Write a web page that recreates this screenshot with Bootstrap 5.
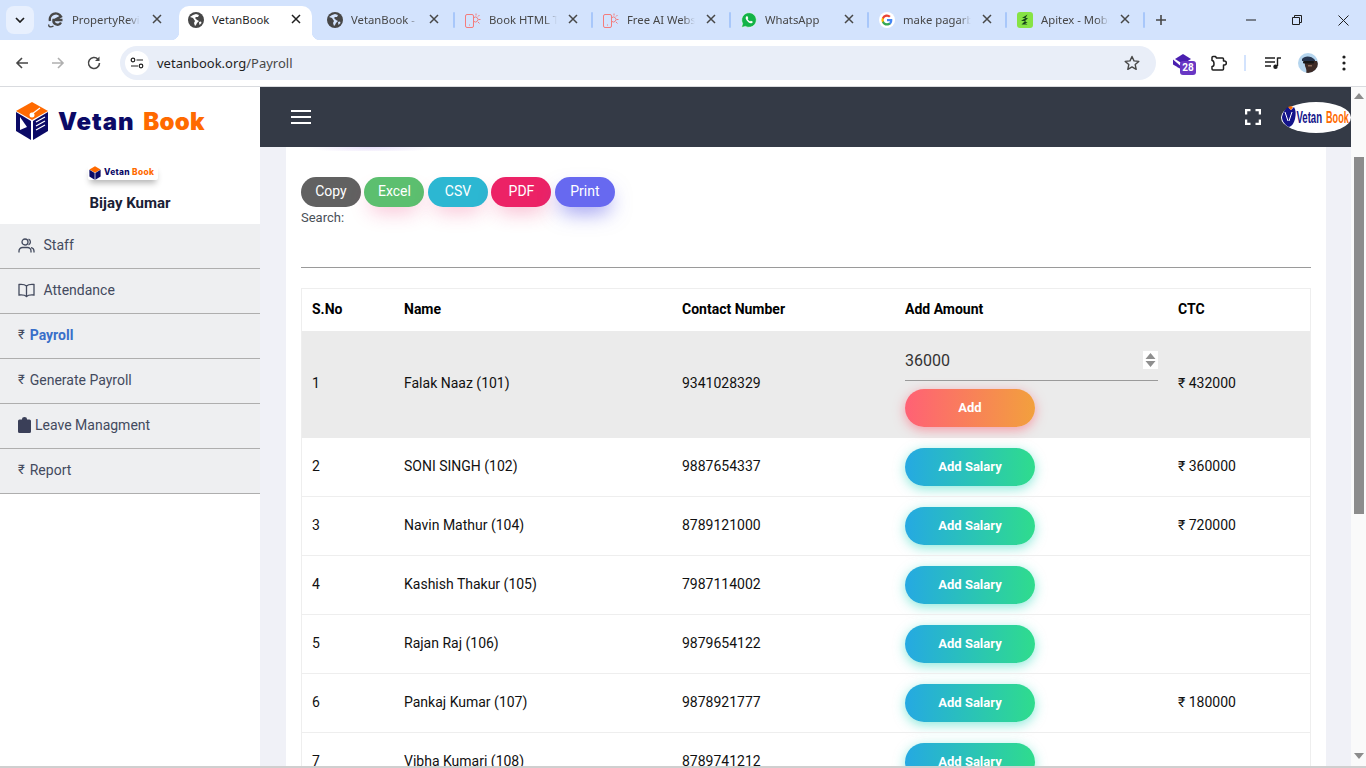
<!DOCTYPE html>
<html lang="en">
<head>
<meta charset="utf-8">
<title>VetanBook</title>
<link href="https://cdn.jsdelivr.net/npm/bootstrap@5.3.0/dist/css/bootstrap.min.css" rel="stylesheet">
<style>
html,body{height:768px;overflow:hidden}
body{font-family:Roboto,"Liberation Sans",sans-serif;font-size:14px;background:#fff;color:#212529}
/* browser chrome */
.tabstrip{height:40px;background:#d3e3fd;font-family:"Noto Sans","Open Sans",sans-serif;font-size:11.3px;color:#474747}
.expander{width:28px;height:28px;margin:6px 2px 0 6px;background:#e8f0fe;border-radius:8px;flex:none}
.ctab{height:34px;margin-top:6px;position:relative}
.ctitle{width:68px;margin-left:8px;overflow:hidden;white-space:nowrap;-webkit-mask-image:linear-gradient(90deg,#000 82%,transparent);mask-image:linear-gradient(90deg,#000 82%,transparent);line-height:16px}
.cclose{margin-left:auto;flex:none;margin-top:-2px}
.tab1{width:143px;padding:0 17px 6px 12px}
.tab2{width:133px;padding:0 11px 6px 9px;background:#fff;border-radius:10px 10px 0 0;color:#1f1f1f}
.tab2 .ctitle{-webkit-mask-image:none;mask-image:none;flex:1 1 auto;color:#1f1f1f}
.tab2::before,.tab2::after{content:"";position:absolute;bottom:0;width:8px;height:8px}
.tab2::before{left:-8px;background:radial-gradient(circle at 0 0,transparent 8px,#fff 8.5px)}
.tab2::after{right:-8px;background:radial-gradient(circle at 100% 0,transparent 8px,#fff 8.5px)}
.tab3{width:141px;padding:0 14px 6px 15px}
.tab4{width:136px;padding:0 13px 6px 10px}
.tabsep{width:2px;height:16px;margin-top:12px;background:#a8c7fa;flex:none;border-radius:1px}
.plus{margin:0 0 0 9px}
.winbtn{width:46px;height:40px}
.toolbar{height:47px;background:#fff;border-bottom:1px solid #d9dbdf;border-radius:8px 8px 0 0}
.navbtn{width:36px;flex:none}
.omni{width:1036px;height:34px;background:#e9eef8;border-radius:17px;margin-left:-8px;padding-left:5px;padding-right:16px;flex:none}
.siteinfo{width:24px;height:24px;border-radius:50%;background:#fff;margin-right:8px}
.urlpath{color:#474747}
.urltext{font-family:"Noto Sans",sans-serif;font-size:13px;color:#1f1f1f;padding-top:2px}
.tool-ext{margin-left:17px;width:24px;height:24px;position:relative;flex:none}
.extbadge{position:absolute;left:7px;top:10px;width:16px;height:14px;background:#6937c4;color:#fff;font:700 10px/14px Roboto,sans-serif;text-align:center;border-radius:3px}
.toolicon{flex:none}
.tool-puzzle{margin-left:14px}
.toolsep{width:2px;height:16px;background:#d3e3fd;margin:0 19px 0 15px;flex:none}
.tool-music{margin-right:17px}
.tool-avatar{margin-right:24px}
/* app */
.appwrap{height:679px}
.sidebar{width:260px;flex:none;background:#fff}
.brandbox{height:137px;background:#fff}
.brandrow{height:64px;padding-left:15px}
.brandname{font-family:Inter,"Noto Sans",sans-serif;font-weight:900;font-size:24px;letter-spacing:1px;line-height:1;margin-left:9px;padding-top:2px;color:#0b0a66;white-space:nowrap}
.brandname span{color:#ff6a00;margin-left:3px;letter-spacing:.2px}
.minilogo{width:70px;height:15px;margin:14px 0 0 88px;background:#fff;box-shadow:0 5px 6px -2px rgba(0,0,0,.3);border-radius:2px;padding-left:1px}
.minilogo b{font-family:Inter,sans-serif;font-weight:800;font-size:8.4px;letter-spacing:.3px;color:#0b0a66;margin-left:3px;white-space:nowrap}
.minilogo b span{color:#ff6a00}
.username{font-weight:700;font-size:15px;color:#1a2035;text-align:center;margin-top:13px;line-height:20px}
.sidenav{list-style:none;margin:0;padding:0}
.sidenav a{display:flex;align-items:center;height:45px;padding:0 0 2px 18px;background:#eeeff1;border-bottom:1px solid #aeaeae;color:#434a5e;text-decoration:none;font-size:14px}
.sidenav a.current{color:#3a6fc9;font-weight:700}
.sidenav svg{flex:none}
.gap-r{margin-right:8.500px}
.gap-c{margin-right:4px}
.rup{color:#434a5e;font-weight:400;margin-right:5px;font-size:13px}
.mainarea{width:1091px;flex:none;background:#f0f1f7;overflow:hidden}
.topbar{height:60px;background:#343a46;padding:0 0 0 31px;flex:none}
.burger{width:20px;display:block}
.burger i{display:block;height:2px;background:#fff;margin:4px 0}
.fsicon{margin-left:auto;margin-right:20px}
.cardwrap{margin:0 25px 0 26px;background:#fff;padding:0 15px;overflow:hidden;flex:1 1 auto}
.shadowbit{height:4px;width:130px;margin-left:5px;background:radial-gradient(ellipse 65px 6px at 50% 0,rgba(150,110,230,.22),transparent);margin-bottom:26px}
.btnrow{height:30px}
.dtbtn{display:inline-block;width:60px;height:30px;line-height:27px;border-radius:15px;border:0;color:#fff;font-size:14px;padding:0 0 2px;text-align:center;vertical-align:top}
.dt-copy{background:#616161}
.dt-excel{background:#5cbf6f;box-shadow:0 10px 20px -5px rgba(233,30,99,.28)}
.dt-csv{background:#2cb7d2;box-shadow:0 10px 20px -5px rgba(233,30,99,.28)}
.dt-pdf{background:#ec2266;box-shadow:0 10px 20px -5px rgba(233,30,99,.32)}
.dt-print{background:#6769f0;box-shadow:0 10px 20px -4px rgba(80,80,230,.55)}
.searchlbl{font-size:13px;line-height:20px;color:#495057;margin:1px 0 39px}
.rule{height:1px;background:#9a9a9a;margin:0 0 20px;opacity:1;border:0}
.paytable{table-layout:fixed;width:1009px;border:1px solid #eee;border-collapse:collapse;margin:0;color:#212529;font-size:14px}
.paytable th,.paytable td{padding:10px;vertical-align:middle;border:0;border-bottom:1px solid #eee;box-shadow:none;background:transparent;color:#111}
.paytable th{height:42px;font-weight:700;color:#000;border-bottom:0}
.paytable tbody td:not(:nth-child(4)){padding-bottom:11px}
.paytable tr.editing td{background:#ebebeb;border-bottom:0}
.c1{width:92.500px}.c2{width:278px}.c3{width:223px}.c4{width:273px}.c5{width:142.500px}
.paytable tbody td{height:59px}
.paytable tr.editing td{height:107px}
.amtbox{position:relative;width:253px;margin-bottom:8px}
.amt{display:block;width:253px;height:40px;border:0;border-bottom:1px solid #9a9a9a;background:transparent;font-family:Roboto,sans-serif;font-size:16px;color:#333;padding:0;outline:0}
.amt::-webkit-inner-spin-button{-webkit-appearance:none;appearance:none;margin:0}
.spinbox{position:absolute;right:0;top:10px;width:15px;height:18px;background:#fff;display:flex;align-items:center;justify-content:center}
.pill{display:block;width:130px;height:38px;border:0;border-radius:19px;color:#fff;font-weight:700;font-size:13px;padding:0;text-align:center}
.pill-add{background:linear-gradient(90deg,#ff6175,#f2a03d);box-shadow:0 3px 12px rgba(255,90,110,.55)}
.pill-sal{background:linear-gradient(90deg,#25a9e2,#2fdc8d);box-shadow:0 3px 12px rgba(45,215,190,.55)}
.vscroll{width:15px;flex:none;background:#fafafa}
.vup{margin:6px auto 0;display:block}
.vthumb{width:10px;height:357px;background:#8c8c8c;margin:58px auto 0}
.vdown{margin:auto auto 7px;display:block}
.winedge{height:2px;background:#cfcfcf}
</style>
</head>
<body>
<div class="tabstrip d-flex">
  <div class="expander d-flex align-items-center justify-content-center"><svg width="10" height="6" viewBox="0 0 10 6"><path d="M1 1l4 4 4-4" fill="none" stroke="#1f1f1f" stroke-width="1.7"/></svg></div>
  <div class="ctab tab1 d-flex align-items-center">
    <svg width="16" height="16" viewBox="0 0 16 16"><path d="M2 9a6 6 0 0 1 11-4.500L6 8.200M14.500 8H5.500a4 4 0 0 0 7.500 2.500" fill="none" stroke="#474747" stroke-width="2.4"/><path d="M1 12.500C0 15 3 15.500 5.500 14" fill="none" stroke="#474747" stroke-width="1.4"/></svg>
    <span class="ctitle">PropertyReview</span>
    <svg class="cclose" width="10" height="10" viewBox="0 0 10 10"><path d="M1 1l8 8M9 1l-8 8" stroke="#474747" stroke-width="1.5"/></svg>
  </div>
  <div class="ctab tab2 d-flex align-items-center">
    <svg width="16" height="16" viewBox="0 0 16 16"><circle cx="8" cy="8" r="8" fill="#474747"/><path d="M2 5l3 1 2 3-1 2 1 3 1-1 1-2 2-2-2-1-1-1-1-1 1-1 2 0 1-2-3-1-3 1z" fill="#fff"/><path d="M11 10l2-.5.5 1.500-2 2z" fill="#fff"/></svg>
    <span class="ctitle">VetanBook</span>
    <svg class="cclose" width="10" height="10" viewBox="0 0 10 10"><path d="M1 1l8 8M9 1l-8 8" stroke="#1f1f1f" stroke-width="1.5"/></svg>
  </div>
  <div class="ctab tab3 d-flex align-items-center">
    <svg width="16" height="16" viewBox="0 0 16 16"><circle cx="8" cy="8" r="8" fill="#474747"/><path d="M2 5l3 1 2 3-1 2 1 3 1-1 1-2 2-2-2-1-1-1-1-1 1-1 2 0 1-2-3-1-3 1z" fill="#d3e3fd"/><path d="M11 10l2-.5.5 1.500-2 2z" fill="#d3e3fd"/></svg>
    <span class="ctitle">VetanBook - Home</span>
    <svg class="cclose" width="10" height="10" viewBox="0 0 10 10"><path d="M1 1l8 8M9 1l-8 8" stroke="#474747" stroke-width="1.5"/></svg>
  </div>
  <i class="tabsep"></i>
  <div class="ctab tab4 d-flex align-items-center">
    <svg width="16" height="16" viewBox="0 0 16 16"><rect x=".5" y="2.500" width="8" height="13" rx="1.500" fill="none" stroke="#f47c7c"/><path d="M9 5.500a2.500 2.500 0 1 1 0 4M11 1.500v2M14.500 3l-1.500 1.500M15.500 7.500h-2M14.500 11.500L13 10M4 13h1" fill="none" stroke="#f47c7c"/></svg>
    <span class="ctitle">Book HTML Template</span>
    <svg class="cclose" width="10" height="10" viewBox="0 0 10 10"><path d="M1 1l8 8M9 1l-8 8" stroke="#474747" stroke-width="1.5"/></svg>
  </div>
  <i class="tabsep"></i>
  <div class="ctab tab4 d-flex align-items-center">
    <svg width="16" height="16" viewBox="0 0 16 16"><rect x=".5" y="2.500" width="8" height="13" rx="1.500" fill="none" stroke="#f47c7c"/><path d="M9 5.500a2.500 2.500 0 1 1 0 4M11 1.500v2M14.500 3l-1.500 1.500M15.500 7.500h-2M14.500 11.500L13 10M4 13h1" fill="none" stroke="#f47c7c"/></svg>
    <span class="ctitle">Free AI Website</span>
    <svg class="cclose" width="10" height="10" viewBox="0 0 10 10"><path d="M1 1l8 8M9 1l-8 8" stroke="#474747" stroke-width="1.5"/></svg>
  </div>
  <i class="tabsep"></i>
  <div class="ctab tab4 d-flex align-items-center">
    <svg width="16" height="16" viewBox="0 0 16 16"><path d="M.5 15.500l1.100-4A7.300 7.300 0 1 1 4.500 14.400z" fill="#12b347" stroke="#fff" stroke-width=".6"/><path d="M5.500 4.200c-1.200 1-1 2.600.3 4.400 1.400 1.900 3.100 3 4.600 2.600.8-.2 1.300-.8 1.400-1.500l-1.900-1-.8.9c-1-.4-2-1.400-2.500-2.500l.7-.8-.8-2z" fill="#fff"/></svg>
    <span class="ctitle">WhatsApp</span>
    <svg class="cclose" width="10" height="10" viewBox="0 0 10 10"><path d="M1 1l8 8M9 1l-8 8" stroke="#474747" stroke-width="1.5"/></svg>
  </div>
  <i class="tabsep"></i>
  <div class="ctab tab4 d-flex align-items-center">
    <svg width="16" height="16" viewBox="0 0 16 16"><circle cx="8" cy="8" r="8" fill="#fff"/><path d="M13.300 8.200c0-.4 0-.8-.1-1.200H8v2.200h3a2.600 2.600 0 0 1-1.100 1.700v1.400h1.800c1-1 1.600-2.400 1.600-4.100z" fill="#4285f4"/><path d="M8 13.500c1.500 0 2.700-.5 3.700-1.300l-1.800-1.400c-.5.3-1.100.5-1.900.5-1.400 0-2.700-1-3.100-2.300H3v1.400a5.500 5.500 0 0 0 5 3.100z" fill="#34a853"/><path d="M4.900 9c-.2-.7-.2-1.400 0-2.100V5.500H3a5.500 5.500 0 0 0 0 5z" fill="#fbbc05"/><path d="M8 4.800c.8 0 1.500.3 2.100.8l1.600-1.600A5.500 5.500 0 0 0 3 5.500l1.900 1.400C5.300 5.700 6.600 4.800 8 4.800z" fill="#ea4335"/></svg>
    <span class="ctitle">make pagarbook</span>
    <svg class="cclose" width="10" height="10" viewBox="0 0 10 10"><path d="M1 1l8 8M9 1l-8 8" stroke="#474747" stroke-width="1.5"/></svg>
  </div>
  <i class="tabsep"></i>
  <div class="ctab tab4 d-flex align-items-center">
    <svg width="16" height="16" viewBox="0 0 16 16"><rect width="16" height="16" rx="3" fill="#86e345"/><path d="M10.500 2.500L5 6h3.500L4 9h4l-3.500 3.500h6L8 11h2.500L8 9l3-3H8.500z" fill="#16421c"/></svg>
    <span class="ctitle">Apitex - Mobile</span>
    <svg class="cclose" width="10" height="10" viewBox="0 0 10 10"><path d="M1 1l8 8M9 1l-8 8" stroke="#474747" stroke-width="1.5"/></svg>
  </div>
  <i class="tabsep"></i>
  <div class="d-flex align-items-center plus"><svg width="14" height="14" viewBox="0 0 14 14"><path d="M7 2v10M2 7h10" stroke="#474747" stroke-width="1.6"/></svg></div>
  <div class="d-flex ms-auto">
    <div class="winbtn d-flex align-items-center justify-content-center"><svg width="10" height="10" viewBox="0 0 10 10"><path d="M0 5h10" stroke="#1f1f1f"/></svg></div>
    <div class="winbtn d-flex align-items-center justify-content-center"><svg width="10" height="10" viewBox="0 0 10 10"><path d="M.5 2.500h7v7h-7zM2.500 2.500V.5h7v7h-2" fill="none" stroke="#1f1f1f"/></svg></div>
    <div class="winbtn d-flex align-items-center justify-content-center"><svg width="11" height="11" viewBox="0 0 11 11"><path d="M.5.500l10 10M10.500.5l-10 10" stroke="#1f1f1f"/></svg></div>
  </div>
</div>
<div class="toolbar d-flex align-items-center ps-1">
  <div class="navbtn d-flex justify-content-center"><svg width="16" height="16" viewBox="0 0 16 16"><path d="M14 8H3M8 3L3 8l5 5" fill="none" stroke="#474747" stroke-width="1.6"/></svg></div>
  <div class="navbtn d-flex justify-content-center"><svg width="16" height="16" viewBox="0 0 16 16"><path d="M2 8h11M8 3l5 5-5 5" fill="none" stroke="#b0b0b0" stroke-width="1.6"/></svg></div>
  <div class="navbtn d-flex justify-content-center"><svg width="16" height="16" viewBox="0 0 16 16"><path d="M13.500 8A5.500 5.500 0 1 1 12 4.200" fill="none" stroke="#474747" stroke-width="1.6"/><path d="M13.500 1.500v4.500H9z" fill="#474747"/></svg></div>
  <div class="omni d-flex align-items-center ms-2">
    <div class="siteinfo d-flex align-items-center justify-content-center"><svg width="14" height="12" viewBox="0 0 14 12"><circle cx="3" cy="3" r="1.800" fill="none" stroke="#1f1f1f" stroke-width="1.200"/><path d="M6.500 3H13M1 9h7" stroke="#1f1f1f" stroke-width="1.200"/><circle cx="11" cy="9" r="1.800" fill="none" stroke="#1f1f1f" stroke-width="1.200"/></svg></div>
    <span class="urltext">vetanbook.org<span class="urlpath">/Payroll</span></span>
    <svg class="ms-auto" width="16" height="16" viewBox="0 0 16 16"><path d="M8 1.500l2 4.400 4.800.5-3.600 3.200 1 4.700L8 11.900l-4.200 2.400 1-4.700L1.200 6.400 6 5.900z" fill="none" stroke="#474747" stroke-width="1.400" stroke-linejoin="round"/></svg>
  </div>
  <div class="tool-ext">
    <svg width="20" height="16" viewBox="0 0 20 16"><path d="M10 0L2 5l8 5 8-5z" fill="#4a1fb0"/><path d="M0 5.500v5l7 4v-3zM4 10v3l6 3 6-3v-3l-6 3.500z" fill="#4a1fb0"/></svg>
    <span class="extbadge">28</span>
  </div>
  <svg class="toolicon tool-puzzle" width="18" height="16" viewBox="0 0 18 16"><path d="M1 2.500c0-.6.400-1 1-1h2.500l1 1.500h6c.6 0 1 .4 1 1V6h.8a2 2 0 0 1 0 4H12.500v4c0 .6-.4 1-1 1H2c-.6 0-1-.4-1-1v-2.500c1.500 0 2-.8 2-2.500S2.500 5.500 1 5.500z" fill="none" stroke="#1f1f1f" stroke-width="1.500" stroke-linejoin="round"/></svg>
  <i class="toolsep"></i>
  <svg class="toolicon tool-music" width="16" height="14" viewBox="0 0 16 14"><path d="M0 2h10M0 6h10M0 10h6" stroke="#1f1f1f" stroke-width="1.400"/><path d="M12.500 1.500v8.500M12.500 2H16" stroke="#1f1f1f" stroke-width="1.400"/><circle cx="10.500" cy="10.800" r="2.200" fill="#1f1f1f"/></svg>
  <svg class="toolicon tool-avatar" width="20" height="20" viewBox="0 0 20 20"><defs><clipPath id="avc"><circle cx="10" cy="10" r="10"/></clipPath></defs><circle cx="10" cy="10" r="10" fill="#b5d5ee"/><g clip-path="url(#avc)"><path d="M8 20c1-2 0-5-1-7l-.5-5H19c2 4 1 9-1 12z" fill="#3c2a26"/><path d="M4 6c2-3 9-4 13 1v1H4z" fill="#26344d"/><rect x="5" y="8" width="11" height="2.400" rx="1" fill="#161616"/><path d="M10 12h4v1.500h-4z" fill="#8a6a58"/></g></svg>
  <svg class="toolicon" width="4" height="16" viewBox="0 0 4 16"><circle cx="2" cy="2" r="1.600" fill="#1f1f1f"/><circle cx="2" cy="8" r="1.600" fill="#1f1f1f"/><circle cx="2" cy="14" r="1.600" fill="#1f1f1f"/></svg>
</div>
<div class="appwrap d-flex">
  <aside class="sidebar">
    <div class="brandbox">
      <div class="brandrow d-flex align-items-center pt-1">
        <svg width="34" height="40" viewBox="0 0 34 40"><path d="M17 1L33 10 17 19 1 10z" fill="#ff6a00"/><path d="M1 11L16 20V39L1 30z" fill="#0b0a66"/><path d="M33 11L18 20V39L33 30z" fill="#0b0a66"/><path d="M5 16l7 10-7 3z" fill="#fff"/><circle cx="17" cy="14" r="2.500" fill="#fff"/><path d="M17 13L25 7M21 21l9-5M21 25l9-5M21 29l9-5" stroke="#fff" stroke-width="1.200"/></svg>
        <div class="brandname">Vetan <span>Book</span></div>
      </div>
      <div class="minilogo d-flex align-items-center">
        <svg width="12" height="14" viewBox="0 0 34 40"><path d="M17 1L33 10 17 19 1 10z" fill="#ff6a00"/><path d="M1 11L16 20V39L1 30z" fill="#0b0a66"/><path d="M33 11L18 20V39L33 30z" fill="#0b0a66"/></svg>
        <b>Vetan <span>Book</span></b>
      </div>
      <div class="username">Bijay Kumar</div>
    </div>
    <ul class="sidenav">
      <li><a href="#"><svg class="gap-r" width="17" height="15" viewBox="0 0 17 15"><circle cx="7" cy="4" r="3" fill="none" stroke="#434a5e" stroke-width="1.300"/><path d="M1 14.500v-1.500a3.500 3.500 0 0 1 3.500-3.500h5A3.500 3.500 0 0 1 13 13v1.500" fill="none" stroke="#434a5e" stroke-width="1.300"/><path d="M10.500 1.200a3 3 0 0 1 0 5.600M13 9.700a3.500 3.500 0 0 1 3 3.300v1.500" fill="none" stroke="#434a5e" stroke-width="1.300"/></svg>Staff</a></li>
      <li><a href="#"><svg class="gap-r" width="17" height="15" viewBox="0 0 17 15"><path d="M8.500 3C7 1.600 4 1.200 1 1.500v10.500c3-.3 6 0 7.500 1.500 1.500-1.500 4.500-1.800 7.500-1.500V1.500c-3-.3-6 .1-7.500 1.500zM8.500 3v10.500" fill="none" stroke="#434a5e" stroke-width="1.300"/></svg>Attendance</a></li>
      <li><a href="#" class="current"><span class="rup">₹</span>Payroll</a></li>
      <li><a href="#"><span class="rup">₹</span>Generate Payroll</a></li>
      <li><a href="#"><svg class="gap-c" width="13" height="16" viewBox="0 0 13 16"><path d="M1.500 2.500H4V2a2.500 2 0 0 1 5 0v.5h2.500a1.500 1.500 0 0 1 1.500 1.500v10.500a1.500 1.500 0 0 1-1.500 1.500h-10A1.500 1.500 0 0 1 0 14.500V4a1.500 1.500 0 0 1 1.500-1.500z" fill="#3a3f58"/></svg>Leave Managment</a></li>
      <li><a href="#"><span class="rup">₹</span>Report</a></li>
    </ul>
  </aside>
  <main class="mainarea d-flex flex-column">
    <nav class="topbar d-flex align-items-center">
      <span class="burger"><i></i><i></i><i></i></span>
      <svg class="fsicon" width="16" height="16" viewBox="0 0 16 16"><path d="M1 5.500V1h4.500M10.500 1H15v4.500M15 10.500V15h-4.500M5.500 15H1v-4.500" fill="none" stroke="#fff" stroke-width="2.500"/></svg>
      <svg width="70" height="31" viewBox="0 0 70 31"><ellipse cx="35" cy="15.500" rx="35" ry="15.500" fill="#fff"/><path d="M1 15c1-5 3-8 6-10l3 3 3-3c2 3 2 7 1 12-1 4-3 7-6 8-4-2-7-6-7-10z" fill="#14148a"/><path d="M7 5l3 3 2-3c-1-1-3-1-5 0z" fill="#ff6a00"/><path d="M4 10l3 9M11 10l-3 9" stroke="#fff" stroke-width="1"/><text transform="translate(15.500 21) scale(.87 1.55)" x="0" y="0" font-family="Liberation Sans,sans-serif" font-weight="700" font-size="11" fill="#14148a">Vetan</text><text transform="translate(45 21) scale(.83 1.55)" x="0" y="0" font-family="Liberation Sans,sans-serif" font-weight="700" font-size="11" fill="#ff6a00">Book</text></svg>
    </nav>
    <section class="cardwrap">
      <div class="shadowbit"></div>
      <div class="btnrow">
        <button class="dtbtn dt-copy">Copy</button>
        <button class="dtbtn dt-excel">Excel</button>
        <button class="dtbtn dt-csv">CSV</button>
        <button class="dtbtn dt-pdf">PDF</button>
        <button class="dtbtn dt-print">Print</button>
      </div>
      <div class="searchlbl">Search:</div>
      <hr class="rule">
      <table class="table paytable">
        <colgroup><col class="c1"><col class="c2"><col class="c3"><col class="c4"><col class="c5"></colgroup>
        <thead><tr><th>S.No</th><th>Name</th><th>Contact Number</th><th>Add Amount</th><th>CTC</th></tr></thead>
        <tbody>
          <tr class="editing"><td>1</td><td>Falak Naaz (101)</td><td>9341028329</td><td><div class="amtbox"><input class="amt" type="number" value="36000"><span class="spinbox"><svg width="11" height="16" viewBox="0 0 11 16"><path d="M5.500 1l5 6H.5zM5.500 15l5-6H.5z" fill="#8f8f8f"/></svg></span></div><button class="pill pill-add">Add</button></td><td>₹ 432000</td></tr>
          <tr><td>2</td><td>SONI SINGH (102)</td><td>9887654337</td><td><button class="pill pill-sal">Add Salary</button></td><td>₹ 360000</td></tr>
          <tr><td>3</td><td>Navin Mathur (104)</td><td>8789121000</td><td><button class="pill pill-sal">Add Salary</button></td><td>₹ 720000</td></tr>
          <tr><td>4</td><td>Kashish Thakur (105)</td><td>7987114002</td><td><button class="pill pill-sal">Add Salary</button></td><td></td></tr>
          <tr><td>5</td><td>Rajan Raj (106)</td><td>9879654122</td><td><button class="pill pill-sal">Add Salary</button></td><td></td></tr>
          <tr><td>6</td><td>Pankaj Kumar (107)</td><td>9878921777</td><td><button class="pill pill-sal">Add Salary</button></td><td>₹ 180000</td></tr>
          <tr><td>7</td><td>Vibha Kumari (108)</td><td>8789741212</td><td><button class="pill pill-sal">Add Salary</button></td><td></td></tr>
        </tbody>
      </table>
    </section>
  </main>
  <div class="vscroll d-flex flex-column">
    <svg class="vup" width="10" height="6" viewBox="0 0 10 6"><path d="M5 0l5 6H0z" fill="#8c8c8c"/></svg>
    <div class="vthumb"></div>
    <svg class="vdown" width="10" height="6" viewBox="0 0 10 6"><path d="M5 6l5-6H0z" fill="#8c8c8c"/></svg>
  </div>
</div>
<div class="winedge"></div>
<script src="https://cdn.jsdelivr.net/npm/bootstrap@5.3.0/dist/js/bootstrap.bundle.min.js"></script>
</body>
</html>
